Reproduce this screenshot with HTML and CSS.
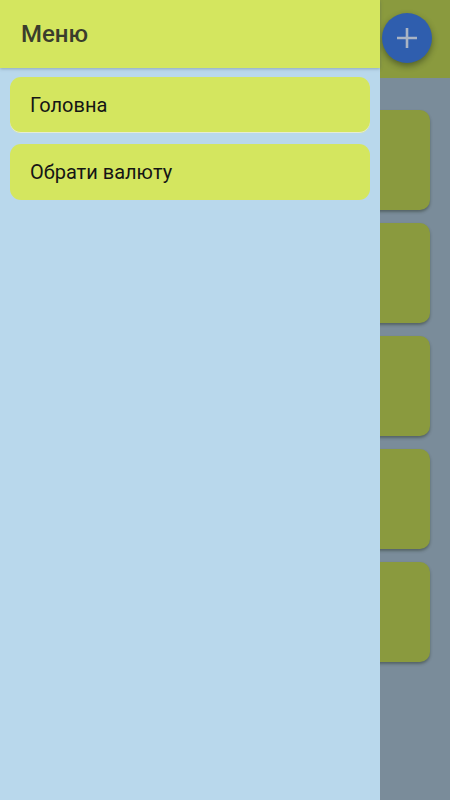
FILE: index.html
```html
<!DOCTYPE html>
<html lang="uk">
<head>
<meta charset="utf-8">
<link rel="stylesheet" href="styles.css">
</head>
<body>
<div class="app">
  <div class="appbar"></div>
  <div class="list">
    <div class="card"></div>
    <div class="card"></div>
    <div class="card"></div>
    <div class="card"></div>
    <div class="card"></div>
  </div>
  <button class="fab" aria-label="add">
    <svg width="22" height="22" viewBox="0 0 22 22"><path d="M11 1v20M1 11h20" stroke="#aab4c4" stroke-width="2.6" fill="none"/></svg>
  </button>
  <nav class="drawer">
    <div class="drawer-head">Меню</div>
    <div class="items">
      <div class="item first">Головна</div>
      <div class="item">Обрати валюту</div>
    </div>
  </nav>
</div>
</body>
</html>
```
FILE: styles.css
```css
* { box-sizing: border-box; }
html, body { margin: 0; padding: 0; }
body { font-family: Roboto, "Noto Sans", sans-serif; }
.app {
  position: relative;
  width: 450px;
  height: 800px;
  background: #7a8c9a;
  overflow: hidden;
}
.appbar {
  height: 78px;
  background: #8a9a3e;
}
.list {
  display: flex;
  flex-direction: column;
  gap: 13px;
  padding: 32px 20px 0 0;
  align-items: flex-end;
}
.card {
  width: 400px;
  height: 100px;
  background: #8a9a3e;
  border-radius: 10px;
  box-shadow: 0 2px 3px rgba(40, 50, 40, 0.45);
}
.fab {
  position: absolute;
  left: 382px;
  top: 13px;
  width: 50px;
  height: 50px;
  border-radius: 50%;
  border: none;
  background: #2f5eae;
  display: flex;
  align-items: center;
  justify-content: center;
  padding: 0;
  box-shadow: 0 3px 6px rgba(20, 30, 20, 0.45);
}
.drawer {
  position: absolute;
  left: 0;
  top: 0;
  width: 380px;
  height: 800px;
  background: #b9d8ec;
  display: flex;
  flex-direction: column;
}
.drawer-head {
  height: 68px;
  background: #d4e65f;
  color: #3a3d2c;
  font-size: 24px;
  font-weight: 500;
  padding-left: 21px;
  padding-bottom: 1px;
  display: flex;
  align-items: center;
  box-shadow: 0 1px 3px rgba(60, 80, 100, 0.35);
  position: relative;
  z-index: 1;
}
.items {
  display: flex;
  flex-direction: column;
  gap: 11px;
  padding: 9px 10px 0 10px;
}
.item {
  height: 56px;
  background: #d4e65f;
  border-radius: 11px;
  font-size: 20px;
  color: #151515;
  padding-left: 20px;
  display: flex;
  align-items: center;
}
.item.first {
  box-shadow: inset 0 -1px 0 #e6ecd4;
}
```
